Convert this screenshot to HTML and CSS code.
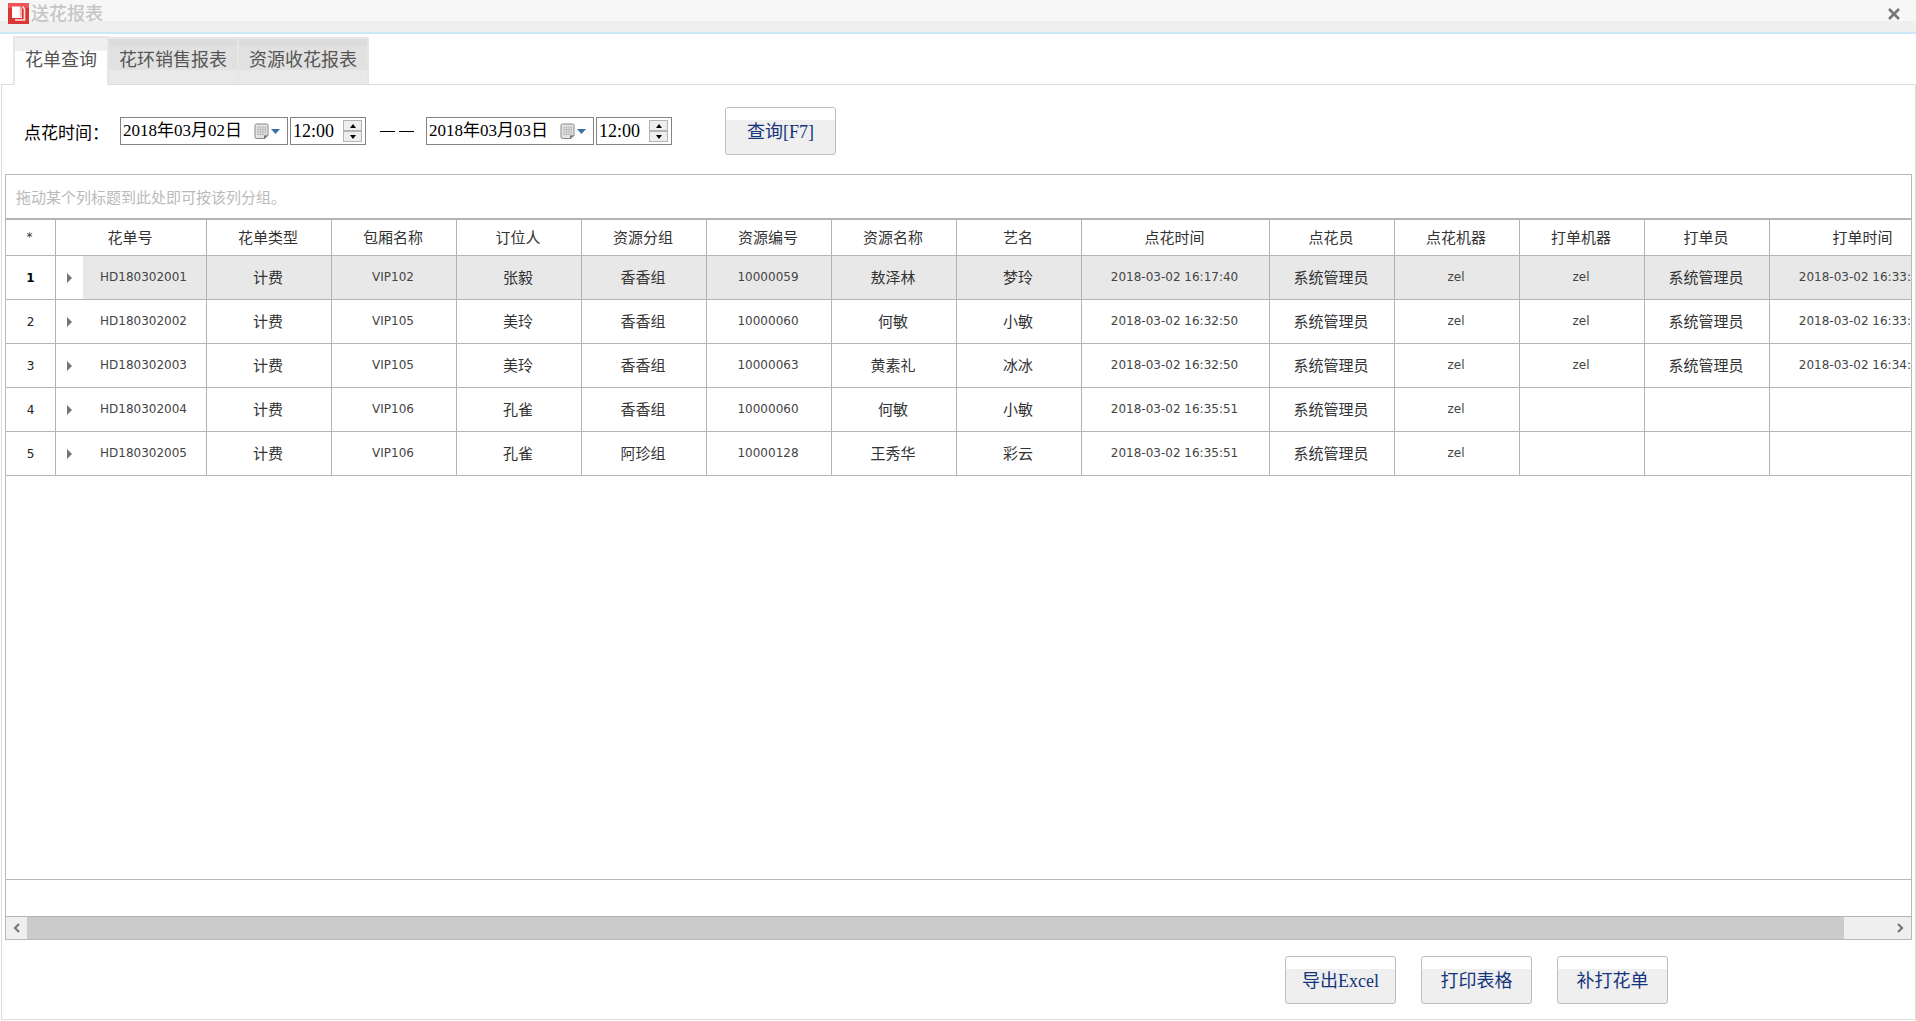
FILE: index.html
```html
<!DOCTYPE html>
<html lang="zh-CN">
<head>
<meta charset="utf-8">
<title>送花报表</title>
<link rel="stylesheet" href="styles.css">
</head>
<body>
<svg class="defs" aria-hidden="true">
  <symbol id="calendar" viewBox="0 0 16 17">
    <path d="M2.500 1h10q1.500 0 1.500 1.500v10l-3 3h-8.500q-1.500 0-1.500-1.500v-11.500q0-1.500 1.500-1.500z" fill="#e4e4e4" stroke="#888"/>
    <path d="M3.500 4h8.500M3.500 6.500h8.500M3.500 9h8.500M3.500 11.500h7M4 4v8M6.500 4v8M9 4v8M11.500 4v7" stroke="#aaa" stroke-width=".6"/>
    <path d="M14 12l-4 4v-3.500z" fill="#777"/>
  </symbol>
</svg>
<header class="titlebar">
  <svg class="logo" viewBox="0 0 21 21" aria-hidden="true">
    <rect width="21" height="21" fill="#d93636"/>
    <rect width="21" height="5" fill="#ee5555"/>
    <path d="M7 17h9.500V6l-2-2.500" fill="none" stroke="#fbe4e4" stroke-width="1.600"/>
    <path d="M4 3.500h8l2 2.500v9H4z" fill="#fff"/>
    <path d="M11.500 3.500l2.500 3v7l-2 1z" fill="#f0b0b0"/>
  </svg>
  <h1 class="title">送花报表</h1>
  <button class="close" aria-label="关闭"><svg viewBox="0 0 12 12"><path d="M1 1l10 10M11 1L1 11" stroke="#777" stroke-width="2.600"/></svg></button>
</header>
<nav class="tabs" role="tablist">
  <button class="tab active" role="tab" aria-selected="true">花单查询</button>
  <button class="tab" role="tab">花环销售报表</button>
  <button class="tab" role="tab">资源收花报表</button>
</nav>
<main class="panel">
  <form class="filters">
    <label class="caption" for="from-date">点花时间：</label>
    <div class="field date">
      <input id="from-date" type="text" value="2018年03月02日">
      <button type="button" class="pick" aria-label="选择开始日期"><svg class="cal"><use href="#calendar"/></svg><svg class="drop" viewBox="0 0 9 5"><path d="M0 0h9L4.500 5z" fill="#3a6ea5"/></svg></button>
    </div>
    <div class="field time">
      <input type="text" value="12:00" aria-label="开始时间">
      <span class="spin"><button type="button" aria-label="增加"><svg viewBox="0 0 6 4"><path d="M0 4h6L3 0z"/></svg></button><button type="button" aria-label="减少"><svg viewBox="0 0 6 4"><path d="M0 0h6L3 4z"/></svg></button></span>
    </div>
    <span class="dash" aria-hidden="true"><i></i><i></i></span>
    <div class="field date">
      <input type="text" value="2018年03月03日" aria-label="结束日期">
      <button type="button" class="pick" aria-label="选择结束日期"><svg class="cal"><use href="#calendar"/></svg><svg class="drop" viewBox="0 0 9 5"><path d="M0 0h9L4.500 5z" fill="#3a6ea5"/></svg></button>
    </div>
    <div class="field time">
      <input type="text" value="12:00" aria-label="结束时间">
      <span class="spin"><button type="button" aria-label="增加"><svg viewBox="0 0 6 4"><path d="M0 4h6L3 0z"/></svg></button><button type="button" aria-label="减少"><svg viewBox="0 0 6 4"><path d="M0 0h6L3 4z"/></svg></button></span>
    </div>
    <button type="button" class="btn query">查询[F7]</button>
  </form>
  <section class="grid">
    <p class="group-hint">拖动某个列标题到此处即可按该列分组。</p>
    <div class="viewport">
      <table class="orders">
        <colgroup>
          <col class="c-num"><col class="c-expand"><col class="c-order">
          <col class="c-std" span="7"><col class="c-wide"><col class="c-std" span="4"><col class="c-wide">
        </colgroup>
        <thead>
          <tr><th>*</th><th colspan="2">花单号</th><th>花单类型</th><th>包厢名称</th><th>订位人</th><th>资源分组</th><th>资源编号</th><th>资源名称</th><th>艺名</th><th>点花时间</th><th>点花员</th><th>点花机器</th><th>打单机器</th><th>打单员</th><th>打单时间</th></tr>
        </thead>
        <tbody>
          <tr class="selected"><td class="num">1</td><td class="expand"><button aria-label="展开"></button></td><td>HD180302001</td><td>计费</td><td>VIP102</td><td>张毅</td><td>香香组</td><td>10000059</td><td>敖泽林</td><td>梦玲</td><td>2018-03-02 16:17:40</td><td>系统管理员</td><td>zel</td><td>zel</td><td>系统管理员</td><td>2018-03-02 16:33:10</td></tr>
          <tr><td class="num">2</td><td class="expand"><button aria-label="展开"></button></td><td>HD180302002</td><td>计费</td><td>VIP105</td><td>美玲</td><td>香香组</td><td>10000060</td><td>何敏</td><td>小敏</td><td>2018-03-02 16:32:50</td><td>系统管理员</td><td>zel</td><td>zel</td><td>系统管理员</td><td>2018-03-02 16:33:10</td></tr>
          <tr><td class="num">3</td><td class="expand"><button aria-label="展开"></button></td><td>HD180302003</td><td>计费</td><td>VIP105</td><td>美玲</td><td>香香组</td><td>10000063</td><td>黄素礼</td><td>冰冰</td><td>2018-03-02 16:32:50</td><td>系统管理员</td><td>zel</td><td>zel</td><td>系统管理员</td><td>2018-03-02 16:34:10</td></tr>
          <tr><td class="num">4</td><td class="expand"><button aria-label="展开"></button></td><td>HD180302004</td><td>计费</td><td>VIP106</td><td>孔雀</td><td>香香组</td><td>10000060</td><td>何敏</td><td>小敏</td><td>2018-03-02 16:35:51</td><td>系统管理员</td><td>zel</td><td></td><td></td><td></td></tr>
          <tr><td class="num">5</td><td class="expand"><button aria-label="展开"></button></td><td>HD180302005</td><td>计费</td><td>VIP106</td><td>孔雀</td><td>阿珍组</td><td>10000128</td><td>王秀华</td><td>彩云</td><td>2018-03-02 16:35:51</td><td>系统管理员</td><td>zel</td><td></td><td></td><td></td></tr>
        </tbody>
      </table>
    </div>
    <div class="summary"></div>
    <div class="scrollbar">
      <button aria-label="向左滚动"><svg viewBox="0 0 9 10"><path d="M7 1L3 5l4 4" fill="none" stroke="#777" stroke-width="2.200"/></svg></button>
      <div class="track"><div class="thumb"></div></div>
      <button aria-label="向右滚动"><svg viewBox="0 0 9 10"><path d="M2 1l4 4-4 4" fill="none" stroke="#777" stroke-width="2.200"/></svg></button>
    </div>
  </section>
  <footer class="actions">
    <button class="btn">导出Excel</button>
    <button class="btn">打印表格</button>
    <button class="btn">补打花单</button>
  </footer>
</main>
</body>
</html>
```
FILE: styles.css
```css
* { box-sizing: border-box; }

body {
  margin: 0;
  min-height: 100vh;
  display: flex;
  flex-direction: column;
  background: #fff;
  color: #000;
  font-family: "Liberation Serif", "Noto Sans CJK SC", sans-serif;
  font-size: 17px;
}

button, input {
  font: inherit;
  color: inherit;
  margin: 0;
  padding: 0;
  border: 0;
  background: none;
}

.defs { display: none; }

/* title bar */
.titlebar {
  display: flex;
  align-items: flex-start;
  height: 34px;
  padding: 3px 16px 0 8px;
  border-bottom: 2px solid #c9e9fa;
  background: linear-gradient(#f7f7f7 21px, #efefef 21px);
}
.logo { width: 21px; height: 21px; }
.title {
  flex: 1;
  margin: 0 0 0 2px;
  font-size: 18px;
  line-height: 22px;
  font-weight: 500;
  color: #c6c6c6;
}
.close { display: flex; padding-top: 5px; }
.close svg { width: 12px; height: 12px; }

/* tabs */
.tabs {
  display: flex;
  align-items: flex-end;
  height: 50px;
  padding-left: 13px;
}
.tab {
  width: 130px;
  height: 47px;
  padding: 0 0 7px;
  border: 2px solid #e6e6e6;
  border-bottom: 0;
  border-left: 0;
  font-size: 18px;
  color: #555;
  background: linear-gradient(#dcdcdc 7px, #e1e1e1 7px 31px, #e9e9e9 31px) no-repeat;
}
.tab.active {
  position: relative;
  width: 96px;
  height: 49px;
  margin-bottom: -1px;
  border-left: 2px solid #e6e6e6;
  background: linear-gradient(#efefef 13px, #fff 13px) no-repeat;
}

/* panel */
.panel {
  flex: 1;
  display: flex;
  flex-direction: column;
  margin: 0 0 1px 1px;
  border: 1px solid #dcdcdc;
  padding: 0 3px;
}
.filters {
  display: flex;
  align-items: center;
  height: 89px;
  padding: 3px 0 0 19px;
}
.caption { width: 96px; font-size: 17px; white-space: nowrap; }
.field {
  display: flex;
  align-items: center;
  height: 28px;
  border: 1px solid #828282;
  margin-right: 2px;
}
.field input { flex: 1; min-width: 0; padding-left: 2px; line-height: 24px; }
.date { width: 168px; }
.time { width: 76px; font-size: 18px; }
.pick { display: flex; align-items: center; gap: 1px; padding-right: 7px; }
.cal { width: 16px; height: 17px; }
.drop { width: 9px; height: 5px; }
.spin { display: flex; flex-direction: column; padding-right: 3px; }
.spin button {
  display: flex;
  align-items: center;
  justify-content: center;
  width: 19px;
  height: 11px;
  border: 1px solid #b4b4b4;
  background: #eee;
}
.spin svg { width: 6px; height: 4px; }
.dash { display: flex; gap: 4px; margin: 0 12px 0 12px; }
.dash i { width: 15px; height: 1px; background: #000; }

.btn {
  width: 111px;
  height: 48px;
  padding-bottom: 3px;
  border: 1px solid #bdbdbd;
  border-radius: 3px;
  font-size: 18px;
  color: #14347c;
  background: linear-gradient(#fff 12px, #efefef 12px) no-repeat;
}
.query { margin-left: 51px; }

/* data grid */
.grid {
  flex: 1;
  display: flex;
  flex-direction: column;
  border: 1px solid #b8b8b8;
}
.group-hint {
  margin: 0;
  padding: 3px 0 0 10px;
  font-size: 15px;
  line-height: 40px;
  color: #bababa;
}
.viewport { flex: 1; overflow: hidden; border-top: 2px solid #b4b4b4; }
.orders {
  width: 1952px;
  table-layout: fixed;
  border-collapse: separate;
  border-spacing: 0;
  font-family: "DejaVu Sans", "Noto Sans CJK SC", sans-serif;
  font-size: 12px;
  color: #444;
}
.c-num { width: 50px; }
.c-expand { width: 27px; }
.c-order { width: 124px; }
.c-std { width: 125px; }
.c-wide { width: 188px; }
.orders th, .orders td {
  padding: 0 2px 2px 0;
  border-right: 1px solid #b4b4b4;
  border-bottom: 1px solid #b4b4b4;
  text-align: center;
  white-space: nowrap;
}
.orders th { height: 36px; font-size: 15px; font-weight: 400; color: #333; }
.orders th:first-child { font-size: 12px; }
.orders td { height: 44px; }
.orders td:nth-child(4), .orders td:nth-child(6), .orders td:nth-child(7),
.orders td:nth-child(9), .orders td:nth-child(10), .orders td:nth-child(12),
.orders td:nth-child(15) { font-size: 15px; color: #333; }
.orders td.expand { padding: 0; border-right: 0; }
.orders td.num { padding: 0; color: #222; }
.orders .selected .num { font-weight: 700; color: #000; }
.selected td { background: #e8e8e8; }
.selected td.num, .selected td.expand { background: #fff; }
.expand button {
  display: block;
  margin: 0 auto;
  border: 5px solid transparent;
  border-left-color: #777;
  border-right: 0;
}

.summary { height: 37px; border-top: 1px solid #b8b8b8; }
.scrollbar {
  display: flex;
  height: 23px;
  border-top: 1px solid #b4b4b4;
  background: #efefef;
}
.scrollbar button {
  display: flex;
  align-items: center;
  justify-content: center;
  width: 21px;
}
.scrollbar svg { width: 9px; height: 10px; }
.track { flex: 1; padding-right: 46px; }
.thumb { height: 100%; background: #cbcbcb; }

.actions {
  display: flex;
  justify-content: flex-end;
  gap: 25px;
  padding: 16px 244px 15px 0;
}
```
